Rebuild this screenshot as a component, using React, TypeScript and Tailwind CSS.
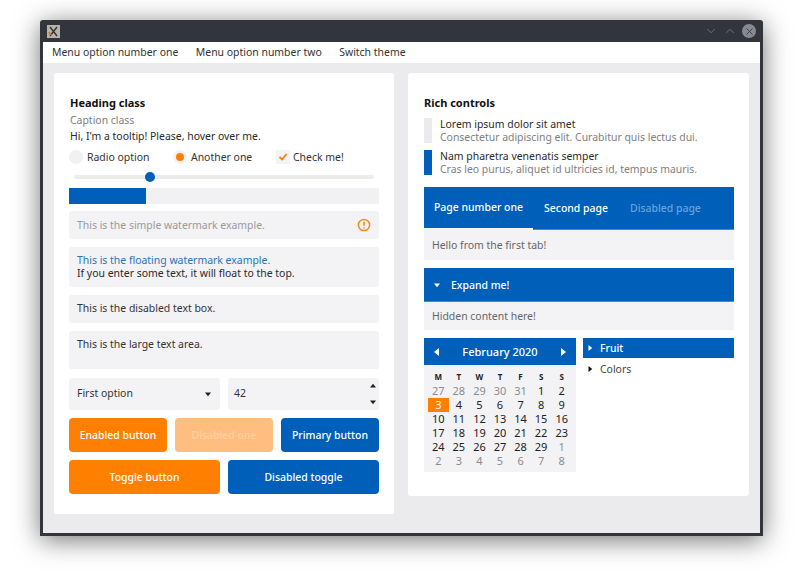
import React from "react";
import { ChevronDown, ChevronUp, X } from "lucide-react";

const BLUE = "bg-[#005fb8]";

function Field({ children, className = "" }: { children: React.ReactNode; className?: string }) {
  return <div className={`rounded-[3px] bg-[#f3f2f5] px-2 ${className}`}>{children}</div>;
}

function Caret({ dir, className = "" }: { dir: "up" | "down" | "left" | "right"; className?: string }) {
  const points = {
    up: "0,6 4,1 8,6",
    down: "0,2 8,2 4,7",
    left: "6,0 6,8 1,4",
    right: "2,0 2,8 7,4",
  }[dir];
  return (
    <svg viewBox="0 0 8 8" className={className}>
      <polygon points={points} fill="currentColor" />
    </svg>
  );
}

function Button({ label, className }: { label: string; className: string }) {
  return (
    <div className={`flex h-[34px] items-center justify-center rounded-[4px] pt-[1px] font-medium ${className}`}>
      {label}
    </div>
  );
}

const days = [
  [27, 28, 29, 30, 31, 1, 2],
  [3, 4, 5, 6, 7, 8, 9],
  [10, 11, 12, 13, 14, 15, 16],
  [17, 18, 19, 20, 21, 22, 23],
  [24, 25, 26, 27, 28, 29, 1],
  [2, 3, 4, 5, 6, 7, 8],
];

function Calendar() {
  return (
    <div className="w-[152px] shrink-0 bg-[#f3f2f5]">
      <div className={`flex h-[27px] items-center justify-between px-[9px] text-white ${BLUE}`}>
        <Caret dir="left" className="size-[8px]" />
        <span className="pt-[1px] text-[11px] font-medium">February 2020</span>
        <Caret dir="right" className="size-[8px]" />
      </div>
      <div className="px-1 pt-[5px] pb-[4px]">
        <div className="grid h-[14px] grid-cols-7 items-center text-center text-[8px] font-bold text-[#222]">
          {["M", "T", "W", "T", "F", "S", "S"].map((d, i) => (
            <span key={i}>{d}</span>
          ))}
        </div>
        {days.map((row, r) => (
          <div key={r} className="grid h-[14px] grid-cols-7 items-center text-center text-[11px] leading-[14px]">
            {row.map((d, c) => {
              const muted = (r === 0 && c < 5) || (r === 4 && c === 6) || r === 5;
              const today = r === 1 && c === 0;
              return (
                <span
                  key={c}
                  className={today ? "bg-[#ff7f00] text-white" : muted ? "text-[#8c8c8c]" : "text-[#222]"}
                >
                  {d}
                </span>
              );
            })}
          </div>
        ))}
      </div>
    </div>
  );
}

function LeftCard() {
  return (
    <section className="flex h-[441px] w-[340px] flex-col rounded-[3px] bg-white pt-[22px] pr-[15px] pl-[15px]">
      <h2 className="h-[16px] pl-[1px] text-[11px] leading-[16px] font-bold text-[#111]">Heading class</h2>
      <p className="mt-[1px] h-[16px] pl-[1px] leading-[16px] text-[#808080]">Caption class</p>
      <p className="h-[16px] pl-[1px] leading-[16px] text-[#2a2a2a]">Hi, I'm a tooltip! Please, hover over me.</p>
      <div className="mt-[5px] flex h-[16px] items-center leading-[16px] text-[#333]">
        <span className="size-[14px] rounded-full bg-[#f1f1f4]" />
        <span className="ml-[3px] w-[87px] pl-[1px]">Radio option</span>
        <span className="flex size-[14px] items-center justify-center rounded-full bg-[#f3f2f5]">
          <span className="size-[8px] rounded-full bg-[#ff7f00]" />
        </span>
        <span className="ml-[3px] w-[86px] pl-[1px]">Another one</span>
        <span className="flex size-[14px] items-center justify-center bg-[#f3f2f5]">
          <svg width="10" height="10" viewBox="0 0 10 10">
            <path d="M1.5 5 L4 7.5 L8.5 2" fill="none" stroke="#ff7f00" strokeWidth="1.8" />
          </svg>
        </span>
        <span className="ml-[3px]">Check me!</span>
      </div>
      <div className="relative mt-[10px] ml-[5px] h-[4px] w-[300px] rounded-full bg-[#ececef]">
        <span className={`absolute top-[-3px] left-[71px] size-[10px] rounded-full ${BLUE}`} />
      </div>
      <div className="mt-[9px] h-[16px] bg-[#f1f1f4]">
        <div className={`h-full w-[77px] ${BLUE}`} />
      </div>
      <Field className="mt-[7px] flex h-[28px] items-center justify-between text-[#9a9a9a]">
        <span className="pt-[1px]">This is the simple watermark example.</span>
        <svg width="14" height="14" viewBox="0 0 14 14">
          <circle cx="7" cy="7" r="5.6" fill="none" stroke="#f08a1c" strokeWidth="1.5" />
          <path d="M7 3.8 V7.8 M7 9.2 V10.4" stroke="#f08a1c" strokeWidth="1.6" />
        </svg>
      </Field>
      <Field className="mt-2 flex h-[40px] flex-col justify-center leading-[13px]">
        <span className="text-[#2b74b8]">This is the floating watermark example.</span>
        <span className="text-[#2a2a2a]">If you enter some text, it will float to the top.</span>
      </Field>
      <Field className="mt-2 flex h-[28px] items-center text-[#333]">This is the disabled text box.</Field>
      <Field className="mt-2 h-[38px] pt-[5px] leading-[16px] text-[#333]">This is the large text area.</Field>
      <div className="mt-[9px] flex h-[32px] gap-2 text-[#333]">
        <Field className="flex w-[151px] items-center justify-between pr-[9px]">
          <span>First option</span>
          <Caret dir="down" className="size-[6px] text-[#222]" />
        </Field>
        <Field className="flex flex-1 items-center justify-between pr-[3px] pl-[6px]">
          <span>42</span>
          <div className="flex h-full flex-col items-center justify-between py-[5px] text-[#222]">
            <Caret dir="up" className="size-[6px]" />
            <Caret dir="down" className="size-[6px]" />
          </div>
        </Field>
      </div>
      <div className="mt-2 grid grid-cols-[98px_98px_98px] gap-x-[8px]">
        <Button label="Enabled button" className="bg-[#ff7f00] text-white" />
        <Button label="Disabled one" className="bg-[#ffbe80] text-[#ffd0a4]" />
        <Button label="Primary button" className={`${BLUE} text-white`} />
      </div>
      <div className="mt-2 grid grid-cols-[151px_151px] gap-x-2">
        <Button label="Toggle button" className="bg-[#ff7f00] text-white" />
        <Button label="Disabled toggle" className={`${BLUE} text-white`} />
      </div>
    </section>
  );
}

function RightCard() {
  return (
    <section className="flex h-[423px] w-[341px] flex-col rounded-[3px] bg-white pt-[22px] pr-[15px] pl-4">
      <h2 className="h-[16px] text-[11px] leading-[16px] font-bold text-[#111]">Rich controls</h2>
      <div className="mt-[7px] flex h-[25px] gap-2 leading-[12.5px]">
        <span className="w-[8px] bg-[#ebebed]" />
        <div>
          <p className="text-[#2a2a2a]">Lorem ipsum dolor sit amet</p>
          <p className="text-[#808080]">Consectetur adipiscing elit. Curabitur quis lectus dui.</p>
        </div>
      </div>
      <div className="mt-[7px] flex h-[25px] gap-2 leading-[12.5px]">
        <span className={`w-[8px] ${BLUE}`} />
        <div>
          <p className="text-[#2a2a2a]">Nam pharetra venenatis semper</p>
          <p className="text-[#808080]">Cras leo purus, aliquet id ultricies id, tempus mauris.</p>
        </div>
      </div>
      <div className={`mt-[12px] flex h-[43px] items-center font-medium text-white ${BLUE}`}>
        <span className="flex h-full w-[109px] items-center justify-center border-b-2 border-[#f3f2f5] pt-[1px]">
          Page number one
        </span>
        <span className="flex h-full w-[86px] items-center justify-center border-b border-[#3d8ad6] pt-[1px]">
          Second page
        </span>
        <span className="flex h-full flex-1 items-center border-b border-[#3d8ad6] pt-[1px] pl-[11px] text-[#6aa3da]">
          Disabled page
        </span>
      </div>
      <Field className="flex h-[30px] items-center rounded-none pt-[2px] text-[#666]">Hello from the first tab!</Field>
      <div className={`mt-2 flex h-[34px] items-center border-b border-[#3d8ad6] pl-[10px] font-medium text-white ${BLUE}`}>
        <Caret dir="down" className="size-[6px]" />
        <span className="ml-[11px] pt-[2px]">Expand me!</span>
      </div>
      <Field className="flex h-[28px] items-center rounded-none pt-[1px] text-[#666]">Hidden content here!</Field>
      <div className="mt-2 flex gap-[7px]">
        <Calendar />
        <div className="flex-1">
          <div className={`flex h-[20px] items-center pl-[4px] font-medium text-white ${BLUE}`}>
            <Caret dir="right" className="size-[6px]" />
            <span className="ml-[7px] pt-[1px]">Fruit</span>
          </div>
          <div className="mt-[1px] flex h-[20px] items-center pl-[4px] text-[#444]">
            <Caret dir="right" className="size-[6px] text-[#111]" />
            <span className="ml-[7px] pt-[1px]">Colors</span>
          </div>
        </div>
      </div>
    </section>
  );
}

export default function App() {
  return (
    <div className="h-[577px] w-[800px] overflow-hidden bg-white pt-[20px] pl-[40px] font-['Noto_Sans',sans-serif] text-[10.45px]">
      <div className="flex h-[516px] w-[723px] flex-col rounded-t-[3px] bg-[#32353b] px-[3px] pb-[3px] shadow-[0_4px_26px_rgba(0,0,0,0.55)]">
        <div className="flex h-[22px] shrink-0 items-center justify-between pr-[4px] pl-[4px]">
          <div className="flex size-[13px] items-center justify-center bg-[#b8b4ad]">
            <svg width="11" height="11" viewBox="0 0 11 11">
              <path d="M2 1 L9 10 M9 1 L2 10" fill="none" stroke="#333" strokeWidth="1.4" />
              <path d="M1 6 Q2 9 4 9" fill="none" stroke="#d9682a" strokeWidth="1.4" />
            </svg>
          </div>
          <div className="flex items-center gap-[5px] text-[#767a80]">
            <ChevronDown size={14} strokeWidth={1.5} />
            <ChevronUp size={14} strokeWidth={1.5} />
            <span className="flex size-[14px] items-center justify-center rounded-full bg-[#878a8f] text-[#3a3d42]">
              <X size={11} strokeWidth={2} />
            </span>
          </div>
        </div>
        <nav className="flex h-[21px] shrink-0 items-center gap-[17.5px] bg-white pl-[9px] text-[#333]">
          <span>Menu option number one</span>
          <span>Menu option number two</span>
          <span>Switch theme</span>
        </nav>
        <main className="flex flex-1 items-start gap-[14px] bg-[#ebebed] pt-[10px] pl-[11px]">
          <LeftCard />
          <RightCard />
        </main>
      </div>
    </div>
  );
}
